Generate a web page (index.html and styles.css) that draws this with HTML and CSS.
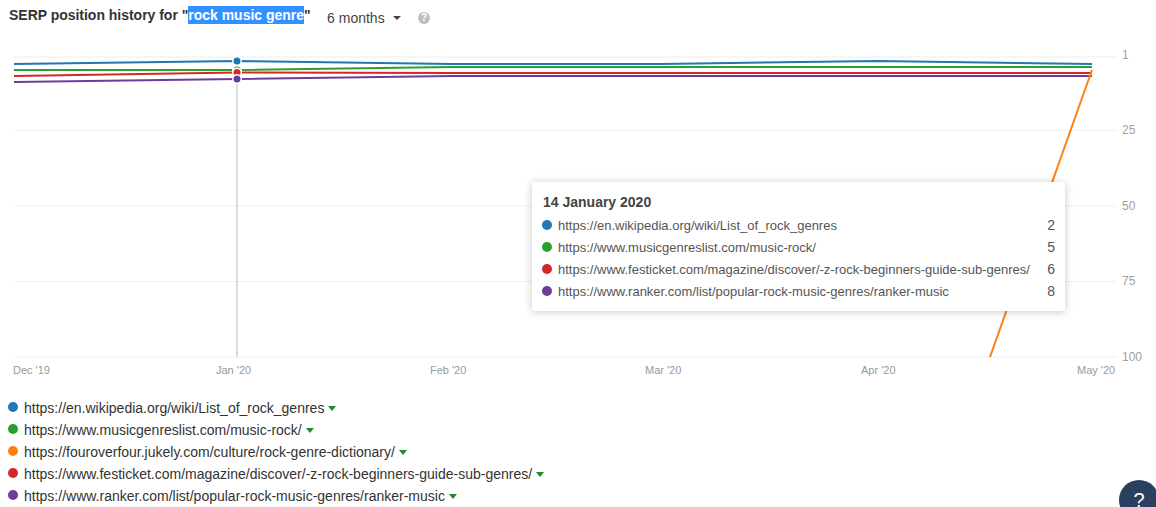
FILE: index.html
```html
<!DOCTYPE html>
<html lang="en">
<head>
<meta charset="utf-8">
<title>SERP position history</title>
<link rel="stylesheet" href="styles.css">
</head>
<body>
<header class="head">
  <h1 class="title">SERP position history for "<span class="sel">rock music genre</span>"</h1>
  <div class="period">6 months <span class="caret"></span></div>
  <span class="hint">?</span>
</header>
<section class="chart">
  <svg class="plot" width="1156" height="345" viewBox="0 40 1156 345">
    <g class="grid">
      <line class="grid-top" x1="14" x2="1117" y1="57" y2="57"/>
      <line x1="14" x2="1117" y1="130.5" y2="130.5"/>
      <line x1="14" x2="1117" y1="206" y2="206"/>
      <line x1="14" x2="1117" y1="281.5" y2="281.5"/>
      <line x1="14" x2="1117" y1="357" y2="357"/>
    </g>
    <g class="ylab">
      <text x="1122" y="59">1</text>
      <text x="1122" y="134">25</text>
      <text x="1122" y="210">50</text>
      <text x="1122" y="285">75</text>
      <text x="1122" y="361">100</text>
    </g>
    <g class="xlab">
      <text x="13" y="374">Dec '19</text>
      <text x="216" y="374">Jan '20</text>
      <text x="430" y="374">Feb '20</text>
      <text x="645" y="374">Mar '20</text>
      <text x="861" y="374">Apr '20</text>
      <text x="1077" y="374">May '20</text>
    </g>
    <line class="cursor" x1="237" x2="237" y1="61" y2="357"/>
    <g class="series">
      <polyline class="s-blue" points="14,64 237,61 452,64 663,64 878,61 1092,64"/>
      <polyline class="s-green" points="14,70 237,70 452,67 663,67 878,67 1092,67"/>
      <polyline class="s-red" points="14,76 237,72.5 452,73 663,73 878,73 1092,73"/>
      <polyline class="s-purple" points="14,82 237,79 452,76 663,76 878,76 1092,76"/>
      <polyline class="s-orange" points="990,357 1092,70"/>
    </g>
    <g class="marks">
      <circle class="m-blue" cx="237" cy="61" r="3.5"/>
      <circle class="m-green" cx="237" cy="70" r="3.5"/>
      <circle class="m-red" cx="237" cy="72.5" r="3.5"/>
      <circle class="m-purple" cx="237" cy="79" r="3.5"/>
    </g>
  </svg>
  <aside class="tip">
    <div class="tip-date">14 January 2020</div>
    <div class="tip-row"><i class="dot blue"></i><span class="tip-url">https://en.wikipedia.org/wiki/List_of_rock_genres</span><span class="tip-num">2</span></div>
    <div class="tip-row"><i class="dot green"></i><span class="tip-url">https://www.musicgenreslist.com/music-rock/</span><span class="tip-num">5</span></div>
    <div class="tip-row"><i class="dot red"></i><span class="tip-url">https://www.festicket.com/magazine/discover/-z-rock-beginners-guide-sub-genres/</span><span class="tip-num">6</span></div>
    <div class="tip-row"><i class="dot purple"></i><span class="tip-url">https://www.ranker.com/list/popular-rock-music-genres/ranker-music</span><span class="tip-num">8</span></div>
  </aside>
</section>
<ul class="legend">
  <li><i class="dot big blue"></i><span>https://en.wikipedia.org/wiki/List_of_rock_genres</span><b class="tri"></b></li>
  <li><i class="dot big green"></i><span>https://www.musicgenreslist.com/music-rock/</span><b class="tri"></b></li>
  <li><i class="dot big orange"></i><span>https://fouroverfour.jukely.com/culture/rock-genre-dictionary/</span><b class="tri"></b></li>
  <li><i class="dot big red"></i><span>https://www.festicket.com/magazine/discover/-z-rock-beginners-guide-sub-genres/</span><b class="tri"></b></li>
  <li><i class="dot big purple"></i><span>https://www.ranker.com/list/popular-rock-music-genres/ranker-music</span><b class="tri"></b></li>
</ul>
<div class="help">?</div>
</body>
</html>
```
FILE: styles.css
```css
* { box-sizing: border-box; }
html, body { height: 100%; }
body {
  margin: 0;
  position: relative;
  overflow: hidden;
  background: #fff;
  font-family: "Liberation Sans", Arial, sans-serif;
  color: #333;
}
.head {
  display: flex;
  align-items: center;
  height: 40px;
  padding: 0 0 4px 9px;
}
.title {
  margin: 0;
  font-size: 14px;
  line-height: 18px;
  font-weight: 700;
  letter-spacing: -0.02px;
  color: #333;
  position: relative;
  top: -3px;
}
.sel { background: #3390ff; color: #fff; display: inline-block; }
.period {
  margin-left: 16.5px;
  font-size: 14px;
  color: #444;
  display: flex;
  align-items: center;
}
.caret {
  margin-left: 8px;
  width: 0;
  height: 0;
  border: 4px solid transparent;
  border-top: 4px solid #444;
  border-bottom: 0;
}
.hint {
  margin-left: 17.5px;
  width: 12px;
  height: 12px;
  border-radius: 50%;
  background: #bdbdbd;
  color: #fff;
  font-size: 10px;
  font-weight: 700;
  line-height: 12px;
  text-align: center;
}
.chart { position: relative; height: 345px; }
.plot { display: block; }
.grid line { stroke: #f0f0f0; stroke-width: 1; }
.grid .grid-top { stroke: #f6f6f6; stroke-width: 2; }
.ylab text { font-size: 12px; fill: #a0a0a0; }
.xlab text { font-size: 11px; fill: #999; }
.cursor { stroke: #dcdcdc; stroke-width: 2; }
.series polyline { fill: none; stroke-width: 2; }
.s-blue { stroke: #1f77b4; }
.s-green { stroke: #2ca02c; }
.s-orange { stroke: #ff7f0e; }
.s-red { stroke: #d62728; }
.s-purple { stroke: #6a3d9a; }
.marks circle { stroke: #fff; stroke-width: 3; paint-order: stroke; }
.m-blue { fill: #1f77b4; }
.m-green { fill: #2ca02c; }
.m-red { fill: #d62728; }
.m-purple { fill: #6a3d9a; }
.tip {
  position: absolute;
  left: 532px;
  top: 142px;
  width: 533px;
  height: 129px;
  padding: 12px 10px 0 10px;
  background: #fff;
  border-radius: 2px;
  box-shadow: 0 1px 8px rgba(0, 0, 0, 0.22);
}
.tip-date {
  font-size: 14px;
  font-weight: 700;
  line-height: 16px;
  color: #444;
  margin: 0 0 4px 1px;
}
.tip-row {
  display: flex;
  align-items: center;
  height: 22px;
  font-size: 13px;
  color: #555;
}
.tip-url { flex: 1; margin-left: 6px; }
.tip-num { font-size: 14px; color: #555; }
.dot {
  display: block;
  flex: none;
  width: 10px;
  height: 10px;
  border-radius: 50%;
}
.dot.big { width: 10px; height: 10px; position: relative; top: -1px; }
.blue { background: #1f77b4; }
.green { background: #2ca02c; }
.orange { background: #ff7f0e; }
.red { background: #d62728; }
.purple { background: #6a3d9a; }
.legend {
  list-style: none;
  margin: 0;
  padding: 12px 0 0 8px;
}
.legend li {
  display: flex;
  align-items: center;
  height: 22px;
  font-size: 14px;
  color: #333;
}
.legend span { margin-left: 6px; }
.tri {
  margin-left: 4px;
  width: 0;
  height: 0;
  border: 4px solid transparent;
  border-top: 5.5px solid #1e8a2e;
  border-bottom: 0;
}
.help {
  position: absolute;
  left: 1119px;
  top: 480px;
  width: 40px;
  height: 40px;
  border-radius: 50%;
  background: #2b3f5f;
  color: #fff;
  font-size: 20px;
  line-height: 40px;
  text-align: center;
}
```
